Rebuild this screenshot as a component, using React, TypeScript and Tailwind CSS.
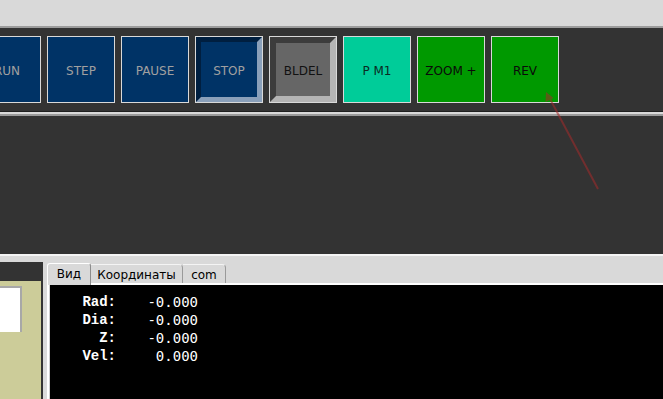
import React from "react";

const btnFont = { fontFamily: '"DejaVu Sans", "Liberation Sans", sans-serif' };

function FlatBtn({ label, bg, fg }: { label: string; bg: string; fg: string }) {
  return (
    <div
      className="w-[68px] h-[67px] shrink-0 border border-[#d9d9d9] flex items-center justify-center pt-[2px] text-[12px]"
      style={{ backgroundColor: bg, color: fg, ...btnFont }}
    >
      {label}
    </div>
  );
}

export default function App() {
  return (
    <div className="relative w-[663px] h-[399px] overflow-hidden bg-[#d9d9d9] flex flex-col">
      <div className="h-[26px] bg-[#d9d9d9]" />
      <div className="h-[2px] bg-[#9c9c9c]" />
      {/* toolbar */}
      <div className="h-[83px] bg-[#333333] pt-[8px]">
        <div className="flex gap-[6px] ml-[-27px]">
          <FlatBtn label="RUN" bg="#003366" fg="#a0a0a0" />
          <FlatBtn label="STEP" bg="#003366" fg="#a0a0a0" />
          <FlatBtn label="PAUSE" bg="#003366" fg="#a0a0a0" />
          <div className="w-[68px] h-[67px] shrink-0 border border-[#d9d9d9]">
            <div
              className="w-full h-full bg-[#003366] border-[5px] border-t-[#001f40] border-l-[#001f40] border-b-[#8aa0ba] border-r-[#8aa0ba] flex items-center justify-center pt-[3px] text-[12px] text-[#a0a0a0]"
              style={btnFont}
            >
              STOP
            </div>
          </div>
          <div className="w-[68px] h-[67px] shrink-0 border border-[#d9d9d9]">
            <div
              className="w-full h-full bg-[#666666] border-[6px] border-t-[#3c3c3c] border-l-[#3c3c3c] border-b-[#b4b4b4] border-r-[#b4b4b4] flex items-center justify-center pt-[3px] text-[12px] text-[#111111]"
              style={btnFont}
            >
              BLDEL
            </div>
          </div>
          <FlatBtn label="P M1" bg="#00cc99" fg="#0a2a22" />
          <FlatBtn label="ZOOM +" bg="#009900" fg="#0a0a0a" />
          <FlatBtn label="REV" bg="#009900" fg="#0a0a0a" />
        </div>
      </div>
      <div className="h-[1px] bg-[#1f1f1f]" />
      <div className="h-[2px] bg-[#d9d9d9]" />
      <div className="h-[2px] bg-[#9a9a9a]" />
      {/* canvas area */}
      <div className="h-[138px] bg-[#333333]" />
      <div className="h-[2px] bg-[#f4f4f4]" />
      {/* bottom */}
      <div className="flex-1 flex pt-[6px] bg-[#d9d9d9]">
        <div className="w-[43px] h-full bg-[#333333] pt-[19px] pr-[2px]">
          <div className="h-full bg-[#cccc99] pt-[5px]">
            <div className="w-[22px] h-[46px] bg-white border-t-2 border-r-2 border-[#a8a8a8]" />
          </div>
        </div>
        <div className="ml-[4px] flex-1 flex flex-col">
          <div className="h-[21px] flex items-end text-[12px] text-black" style={btnFont}>
            <div className="h-[22px] w-[44px] bg-[#d9d9d9] border-t border-l border-white border-r border-r-[#8c8c8c] rounded-tl-[3px] rounded-tr-[3px] flex items-center justify-center relative z-10 mb-[-2px] pb-[1px]">
              Вид
            </div>
            <div className="h-[19px] w-[92px] bg-[#d9d9d9] border-t border-t-[#f4f4f4] border-r border-r-[#9a9a9a] rounded-tr-[4px] flex items-center justify-center pt-[1px]">
              Координаты
            </div>
            <div className="h-[19px] w-[43px] bg-[#d9d9d9] border-t border-t-[#f4f4f4] border-r border-r-[#9a9a9a] rounded-tr-[4px] flex items-center justify-center pt-[1px]">
              com
            </div>
          </div>
          <div className="flex-1 border-t-2 border-l-2 border-white bg-[#cfcfcf] pl-[1px]">
            <div className="h-full bg-black pt-[8px] pl-[32px]">
              <div className="grid grid-cols-[34px_82px] leading-[18px] text-white text-[14px]">
                {[
                  ["Rad:", "-0.000"],
                  ["Dia:", "-0.000"],
                  ["Z:", "-0.000"],
                  ["Vel:", "0.000"],
                ].map(([l, v]) => (
                  <React.Fragment key={l}>
                    <div
                      className="text-right font-bold"
                      style={{ fontFamily: '"Liberation Mono", "Courier New", monospace' }}
                    >
                      {l}
                    </div>
                    <div
                      className="text-right"
                      style={{ fontFamily: '"DejaVu Sans Mono", monospace' }}
                    >
                      {v}
                    </div>
                  </React.Fragment>
                ))}
              </div>
            </div>
          </div>
        </div>
      </div>
      {/* red arrow overlay */}
      <svg className="absolute left-0 top-0 pointer-events-none" width="663" height="399">
        <g opacity="0.55">
          <line x1="598" y1="189" x2="549" y2="97" stroke="#a52a2a" strokeWidth="2" />
          <polygon points="546,92 545.5,102 553.5,98" fill="#a52a2a" />
        </g>
      </svg>
    </div>
  );
}
